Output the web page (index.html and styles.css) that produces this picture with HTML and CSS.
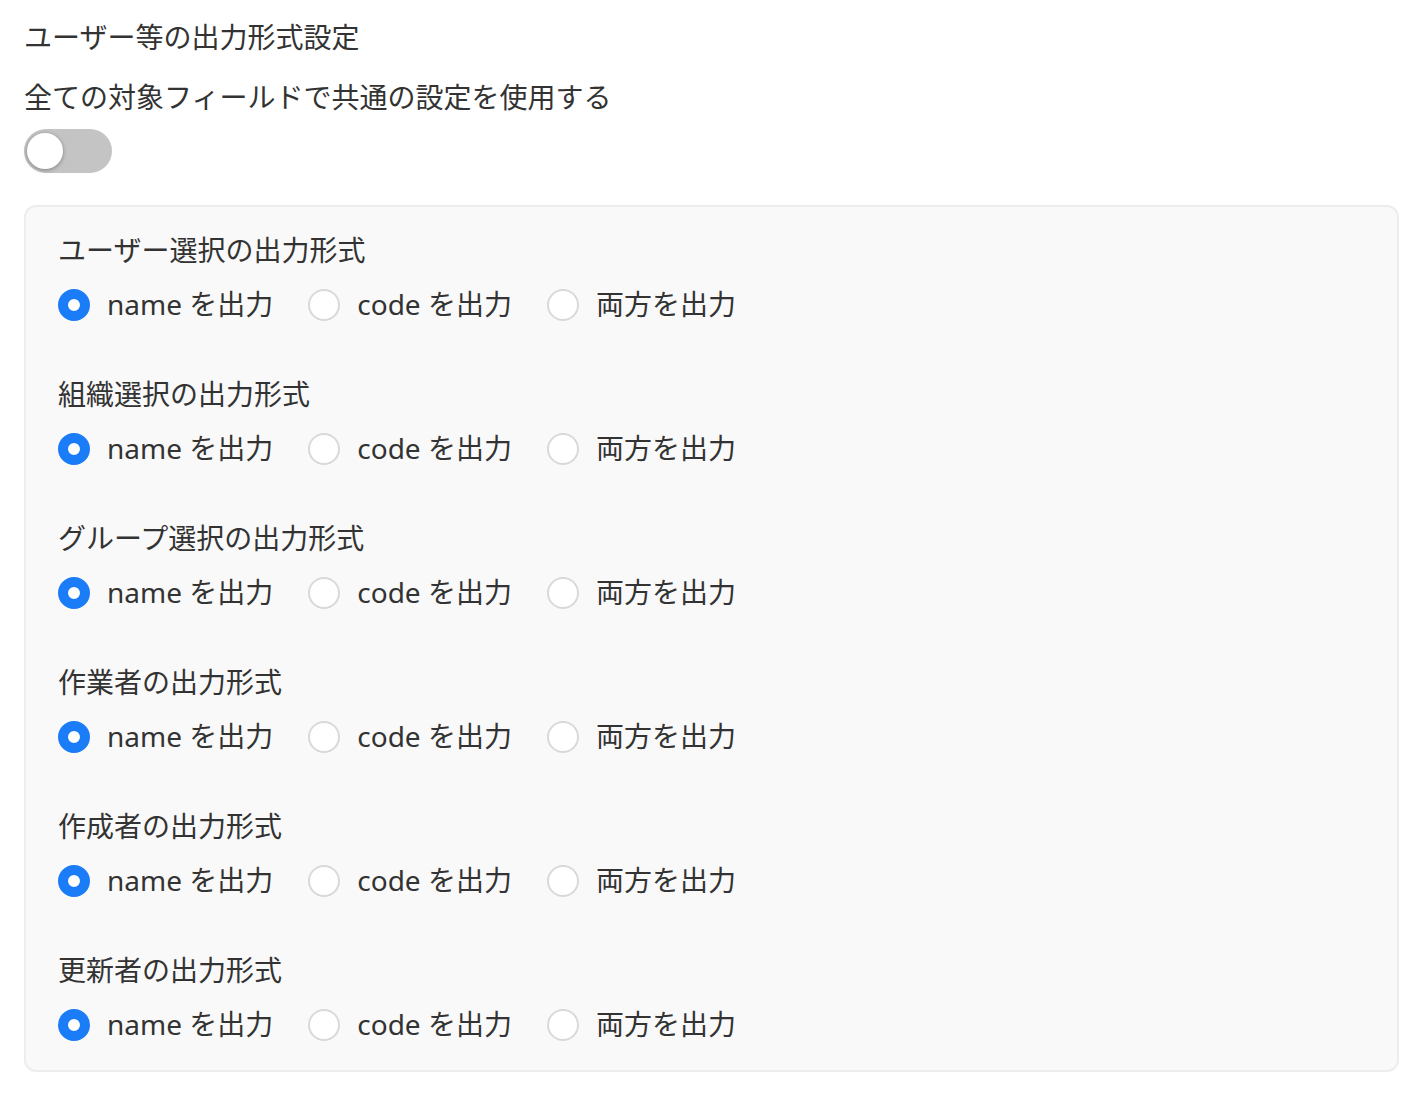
FILE: index.html
```html
<!DOCTYPE html>
<html lang="ja">
<head>
<meta charset="utf-8">
<link rel="stylesheet" href="styles.css">
</head>
<body>
<div class="page">
  <div class="title">ユーザー等の出力形式設定</div>
  <div class="label">全ての対象フィールドで共通の設定を使用する</div>
  <div class="toggle"><span class="knob"></span></div>
  <div class="card">
    <div class="group">
      <div class="gtitle">ユーザー選択の出力形式</div>
      <div class="radios">
        <label class="opt"><span class="radio checked"></span><span class="otext">name を出力</span></label>
        <label class="opt"><span class="radio"></span><span class="otext">code を出力</span></label>
        <label class="opt"><span class="radio"></span><span class="otext">両方を出力</span></label>
      </div>
    </div>
    <div class="group">
      <div class="gtitle">組織選択の出力形式</div>
      <div class="radios">
        <label class="opt"><span class="radio checked"></span><span class="otext">name を出力</span></label>
        <label class="opt"><span class="radio"></span><span class="otext">code を出力</span></label>
        <label class="opt"><span class="radio"></span><span class="otext">両方を出力</span></label>
      </div>
    </div>
    <div class="group">
      <div class="gtitle">グループ選択の出力形式</div>
      <div class="radios">
        <label class="opt"><span class="radio checked"></span><span class="otext">name を出力</span></label>
        <label class="opt"><span class="radio"></span><span class="otext">code を出力</span></label>
        <label class="opt"><span class="radio"></span><span class="otext">両方を出力</span></label>
      </div>
    </div>
    <div class="group">
      <div class="gtitle">作業者の出力形式</div>
      <div class="radios">
        <label class="opt"><span class="radio checked"></span><span class="otext">name を出力</span></label>
        <label class="opt"><span class="radio"></span><span class="otext">code を出力</span></label>
        <label class="opt"><span class="radio"></span><span class="otext">両方を出力</span></label>
      </div>
    </div>
    <div class="group">
      <div class="gtitle">作成者の出力形式</div>
      <div class="radios">
        <label class="opt"><span class="radio checked"></span><span class="otext">name を出力</span></label>
        <label class="opt"><span class="radio"></span><span class="otext">code を出力</span></label>
        <label class="opt"><span class="radio"></span><span class="otext">両方を出力</span></label>
      </div>
    </div>
    <div class="group">
      <div class="gtitle">更新者の出力形式</div>
      <div class="radios">
        <label class="opt"><span class="radio checked"></span><span class="otext">name を出力</span></label>
        <label class="opt"><span class="radio"></span><span class="otext">code を出力</span></label>
        <label class="opt"><span class="radio"></span><span class="otext">両方を出力</span></label>
      </div>
    </div>
  </div>
</div>
</body>
</html>
```
FILE: styles.css
```css
html, body {
  margin: 0;
  padding: 0;
  background: #fff;
}
body {
  font-family: "Noto Sans", "Noto Sans CJK JP", sans-serif;
  color: #333;
  font-size: 28px;
}
.page {
  padding: 16px 24px 24px 24px;
  width: 1375px;
}
.title, .label, .gtitle {
  line-height: 42px;
  height: 42px;
}
.label {
  margin-top: 18px;
}
.toggle {
  margin-top: 11px;
  width: 88px;
  height: 44px;
  border-radius: 22px;
  background: #c4c4c4;
  position: relative;
}
.knob {
  position: absolute;
  left: 3px;
  top: 4px;
  width: 36px;
  height: 36px;
  border-radius: 50%;
  background: #fff;
  box-shadow: 0 1px 4px rgba(0,0,0,0.35);
}
.card {
  margin-top: 32px;
  background: #f9f9f9;
  border: 2px solid #ededed;
  border-radius: 12px;
  padding: 22px 32px 24px 32px;
  display: flex;
  flex-direction: column;
  gap: 47px;
}
.radios {
  margin-top: 13px;
  display: flex;
  gap: 35px;
  height: 42px;
  align-items: center;
}
.opt {
  display: flex;
  align-items: center;
  gap: 17px;
  line-height: 42px;
}
.otext {
  margin-top: -3px;
}
.radio {
  box-sizing: border-box;
  width: 32px;
  height: 32px;
  border-radius: 50%;
  border: 2px solid #d9d9d9;
  background: #fff;
}
.radio.checked {
  border: 10px solid #1a7cf6;
  background: #fff;
}
```
